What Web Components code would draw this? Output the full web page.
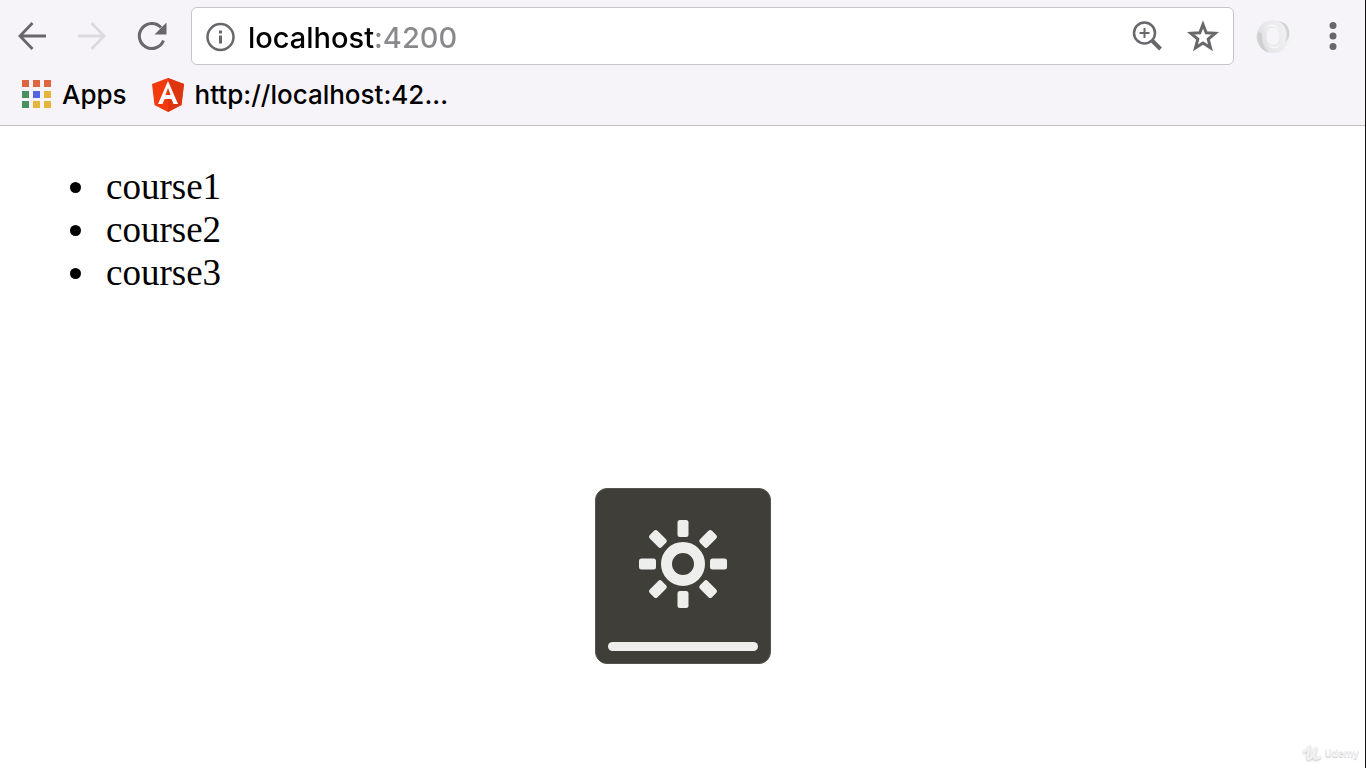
<!DOCTYPE html>
<html lang="en">
<head>
<meta charset="utf-8">
<title>localhost:4200</title>
<style>
html, body { margin: 0; min-height: 100vh; background: #fff; }
body { font-family: Inter, "Liberation Sans", sans-serif; color: #000; }
</style>
</head>
<body>
<browser-window>
  <browser-toolbar slot="chrome"></browser-toolbar>
  <bookmarks-bar slot="chrome"></bookmarks-bar>
  <course-list></course-list>
  <brightness-hud slot="overlay"></brightness-hud>
  <video-watermark slot="overlay"></video-watermark>
</browser-window>
<script>
const define = (name, html) => customElements.define(name, class extends HTMLElement {
  constructor() {
    super();
    this.attachShadow({ mode: 'open' }).innerHTML = html;
  }
});

define('browser-window', `
  <style>
    :host { display: flex; flex-direction: column; min-height: 100vh; box-sizing: border-box; border-right: 1px solid #111; background: #fff; }
    header { background: #f6f4f8; border-bottom: 1px solid #c3c1c5; }
    main { flex: 1; }
  </style>
  <header><slot name="chrome"></slot></header>
  <main><slot></slot></main>
  <slot name="overlay"></slot>`);

customElements.define('icon-button', class extends HTMLElement {
  connectedCallback() {
    if (this.shadowRoot) return;
    this.attachShadow({ mode: 'open' }).innerHTML = `
      <style>
        :host { display: block; flex: none; }
        button { display: block; padding: 0; border: 0; background: none; color: inherit; font: inherit; }
      </style>
      <button type="button"><slot></slot></button>`;
    this.shadowRoot.querySelector('button').setAttribute('aria-label', this.title);
  }
});

define('address-bar', `
  <style>
    :host { display: flex; align-items: center; box-sizing: border-box; height: 58px; padding: 0 12px; background: #fff; border: 1px solid #c6c4c8; border-radius: 6px; color: #69676b; }
    svg { display: block; }
    input { flex: 1; min-width: 0; height: 44px; margin: 0 0 0 10px; padding: 2px 0 0; border: 0; outline: 0; font: 500 29px/42px Inter, "Liberation Sans", sans-serif;
      color: #000; -webkit-text-fill-color: transparent; background: linear-gradient(to right, #000 126px, #8b888d 126px); -webkit-background-clip: text; background-clip: text; }
    .actions { display: flex; gap: 20px; }
  </style>
  <icon-button title="Site information"><svg width="34" height="34" viewBox="0 0 34 34"><circle cx="16.500" cy="18" r="13" fill="none" stroke="currentColor" stroke-width="2.5"/><path d="M15 11.500h3v3h-3zM15 16.500h3v8h-3z" fill="currentColor"/></svg></icon-button>
  <input type="text" aria-label="Address" value="localhost:4200" spellcheck="false">
  <div class="actions">
    <icon-button title="Zoom"><svg width="36" height="36" viewBox="0 0 36 36" fill="none" stroke="currentColor"><circle cx="15.500" cy="15" r="10.500" stroke-width="2.500"/><path d="M15.500 10v10M10.500 15h10" stroke-width="2"/><path d="M23 22.500l8.500 8.500" stroke-width="4"/></svg></icon-button>
    <icon-button title="Bookmark this page"><svg width="36" height="36" viewBox="0 0 36 36"><path d="M18 6.500l3.200 8.200 9 .6-7 5.800 2.300 8.700L18 25l-7.500 4.800 2.300-8.700-7-5.800 9-.6z" fill="none" stroke="currentColor" stroke-width="3"/></svg></icon-button>
  </div>`);

define('browser-toolbar', `
  <style>
    :host { display: flex; align-items: center; padding: 7px 14px 0; color: #69676b; }
    svg { display: block; }
    nav { display: flex; gap: 24px; margin-right: 21px; }
    .off { color: #dcdadd; }
    address-bar { flex: 1; }
    .extra { display: flex; gap: 24px; margin-left: 21px; }
  </style>
  <nav aria-label="Navigation">
    <icon-button title="Back"><svg width="36" height="36" viewBox="0 0 36 36" fill="none" stroke="currentColor" stroke-width="2.800"><path d="M32 18H6M18.500 5L6 18l12.500 13"/></svg></icon-button>
    <icon-button title="Forward" class="off"><svg width="36" height="36" viewBox="0 0 36 36" fill="none" stroke="currentColor" stroke-width="2.800"><path d="M4 18h26M17.500 5L30 18 17.500 31"/></svg></icon-button>
    <icon-button title="Reload"><svg width="36" height="36" viewBox="0 0 36 36"><path d="M27 9.500A12.500 12.500 0 1 0 29.500 22.500" fill="none" stroke="currentColor" stroke-width="3"/><path d="M32.500 4.500v12H20.500z" fill="currentColor"/></svg></icon-button>
  </nav>
  <address-bar></address-bar>
  <div class="extra">
    <icon-button title="Extension"><svg width="36" height="36" viewBox="0 0 36 36">
      <defs><linearGradient id="a" x1="0" y1=".7" x2="1" y2=".3"><stop offset="0" stop-color="#dad9db"/><stop offset=".35" stop-color="#e8e7e9"/><stop offset="1" stop-color="#f1f0f2"/></linearGradient></defs>
      <path d="M18 2a16.500 16.500 0 1 1 0 33 16.500 16.500 0 1 1 0-33zM18 9.500c-4 0-6.500 4-6.500 9s2.500 8.500 6.500 8.500 6.500-3.500 6.500-8.500-2.500-9-6.500-9z" fill="url(#a)" fill-rule="evenodd"/>
      <path d="M3 14c-2 9 2 18 11 21-5-5-8-12-7-20z" fill="#cfced0"/>
      <path d="M23 3c8 4 11 13 7 21 4-3 5-8 4-12-1-5-5-8-11-9z" fill="#d3d2d4"/>
      <path d="M11 11c3-4 9-4 13 1-2-6-10-8-13-1zM25 26c-3 4-9 4-13-1 2 6 10 8 13 1z" fill="#f8f7f9"/>
    </svg></icon-button>
    <icon-button title="Menu"><svg width="36" height="36" viewBox="0 0 36 36" fill="currentColor"><circle cx="18" cy="7.500" r="3.500"/><circle cx="18" cy="18" r="3.500"/><circle cx="18" cy="28.500" r="3.500"/></svg></icon-button>
  </div>`);

define('book-mark', `
  <style>
    :host { display: block; }
    a { display: flex; align-items: center; gap: 10px; color: #000; text-decoration: none; font-size: 26px; font-weight: 500; line-height: 36px; white-space: nowrap; }
  </style>
  <a href="#"><slot name="icon"></slot><span><slot></slot></span></a>`);

define('bookmarks-bar', `
  <style>
    :host { display: flex; gap: 24px; padding: 12px 20px; }
    svg { display: block; }
  </style>
  <book-mark><svg slot="icon" width="32" height="36" viewBox="0 0 32 36"><path d="M2 3h7v7H2zM13 3h7v7h-7zM24 3h7v7h-7z" fill="#df6440"/><path d="M2 14h7v7H2zM2 24h7v7H2z" fill="#4a9162"/><path d="M13 14h7v7h-7z" fill="#5367e4"/><path d="M24 14h7v7h-7zM13 24h7v7h-7zM24 24h7v7h-7z" fill="#e6b33c"/></svg>Apps</book-mark>
  <book-mark><svg slot="icon" width="34" height="36" viewBox="0 0 34 36"><path d="M17 1l16 6-2.500 21L17 35 3.500 28 1 7z" fill="#f23a0c"/><path d="M17 1l16 6-2.500 21L17 35z" fill="#dd3510"/><path d="M17 4L7 27h4.500l2-5h7l2 5H27zM17 11l2.600 7h-5.200z" fill="#fff" fill-rule="evenodd"/></svg>http://localhost:42...</book-mark>`);

define('course-list', `
  <style>
    :host { display: block; padding: 39px 18px; font: 37px/43px "Liberation Serif", serif; }
    ul { margin: 0; padding: 0 0 0 81px; }
    li { padding-left: 7px; }
  </style>
  <ul><li>course1</li><li>course2</li><li>course3</li></ul>`);

define('brightness-hud', `
  <style>
    :host { position: fixed; bottom: 104px; left: 50%; transform: translateX(-50%); display: flex; flex-direction: column; justify-content: space-between; box-sizing: border-box; width: 176px; height: 176px; padding: 31px 12px 12px; border-radius: 12px; background: #3f3e38; border: 1px solid #55544f; }
    svg { display: block; align-self: center; }
    .level { height: 9px; border-radius: 5px; background: #eeeeec; }
  </style>
  <svg width="88" height="88" viewBox="-44 -44 88 88" fill="#eeeeec" aria-hidden="true">
    <circle r="16.500" fill="none" stroke="#eeeeec" stroke-width="11"/>
    <defs><rect id="r" x="-5.500" y="-44" width="11" height="17" rx="2.500"/></defs>
    <use href="#r"/><use href="#r" transform="rotate(90)"/><use href="#r" transform="rotate(180)"/><use href="#r" transform="rotate(270)"/>
    <use href="#r" transform="rotate(45)"/><use href="#r" transform="rotate(135)"/><use href="#r" transform="rotate(225)"/><use href="#r" transform="rotate(315)"/>
  </svg>
  <div class="level" role="progressbar" aria-label="Brightness" aria-valuenow="100"></div>`);

define('video-watermark', `
  <style>
    :host { position: fixed; right: 7px; bottom: 6px; display: flex; align-items: center; gap: 2px; color: #f1f0f2; font: bold 10px/18px Inter, sans-serif; text-shadow: 0 1px 1px #cbc9cc; }
    svg { display: block; filter: drop-shadow(0 1px 1px #c3c1c4); }
  </style>
  <svg width="20" height="18" viewBox="0 0 20 18" fill="none" stroke="currentColor" stroke-width="2.500" stroke-linecap="round" stroke-linejoin="round"><path d="M2 7.500Q5 7 8 2.500L5.500 12Q5 16 8 14.500 11 12 14 4L12 12Q12 17 18 13"/></svg>
  <span>Udemy</span>`);
</script>
</body>
</html>
